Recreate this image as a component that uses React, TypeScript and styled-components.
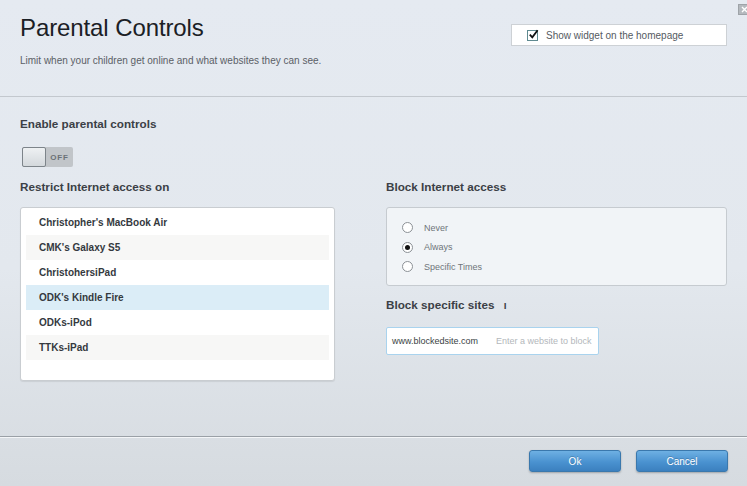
import React from "react";
import styled, { createGlobalStyle } from "styled-components";

const GlobalStyle = createGlobalStyle`
  html, body {
    margin: 0;
    padding: 0;
  }
  body {
    font-family: "Liberation Sans", Arial, sans-serif;
    color: #333;
  }
`;

const devices = [
  "Christopher's MacBook Air",
  "CMK's Galaxy S5",
  "ChristohersiPad",
  "ODK's Kindle Fire",
  "ODKs-iPod",
  "TTKs-iPad",
];

const options = ["Never", "Always", "Specific Times"];

const App: React.FC = () => {
  const selectedDevice = 3;
  const blockMode = 1;

  return (
    <>
      <GlobalStyle />
      <StyledPage>
        <CloseButton aria-label="close">
          <svg width="9" height="9" viewBox="0 0 9 9">
            <path d="M2 2 L7 7 M7 2 L2 7" stroke="#fff" strokeWidth="1.4" />
          </svg>
        </CloseButton>

        <Header>
          <div>
            <Title>Parental Controls</Title>
            <Subtitle>
              Limit when your children get online and what websites they can
              see.
            </Subtitle>
          </div>
          <WidgetBox>
            <CheckBox>
              <svg width="11" height="11" viewBox="0 0 11 11">
                <path
                  d="M1.8 5.6 L4.3 8.3 L9.6 1.2"
                  fill="none"
                  stroke="#111"
                  strokeWidth="1.8"
                />
              </svg>
            </CheckBox>
            Show widget on the homepage
          </WidgetBox>
        </Header>

        <Body>
          <Heading>Enable parental controls</Heading>
          <Toggle>
            <Knob />
            <ToggleLabel>OFF</ToggleLabel>
          </Toggle>

          <Columns>
            <Column>
              <Heading>Restrict Internet access on</Heading>
              <DeviceList>
                {devices.map((d, i) => (
                  <DeviceRow
                    key={d}
                    $alt={i % 4 === 1}
                    $active={i === selectedDevice}
                  >
                    {d}
                  </DeviceRow>
                ))}
              </DeviceList>
            </Column>

            <Column>
              <Heading>Block Internet access</Heading>
              <RadioPanel>
                {options.map((o, i) => (
                  <RadioRow key={o}>
                    <Radio $checked={i === blockMode} />
                    {o}
                  </RadioRow>
                ))}
              </RadioPanel>
              <SitesHeading>
                Block specific sites <InfoMark>ı</InfoMark>
              </SitesHeading>
              <SiteInput>
                <SiteValue>www.blockedsite.com</SiteValue>
                <SiteField placeholder="Enter a website to block" />
              </SiteInput>
            </Column>
          </Columns>
        </Body>

        <Footer>
          <ActionButton>Ok</ActionButton>
          <ActionButton>Cancel</ActionButton>
        </Footer>
      </StyledPage>
    </>
  );
};

const StyledPage = styled.div`
  position: relative;
  width: 747px;
  height: 486px;
  overflow: hidden;
  display: flex;
  flex-direction: column;
  background: linear-gradient(180deg, #e5eaf1 0%, #e3e8ee 55%, #d6dbe0 100%);
`;

const CloseButton = styled.div`
  position: absolute;
  top: 4px;
  right: -3px;
  width: 10px;
  height: 9px;
  background: #b4b9be;
  border: 1px solid #9ea3a8;
  display: flex;
  align-items: center;
  justify-content: center;
`;

const Header = styled.header`
  height: 82px;
  padding: 14px 20px 0 20px;
  display: flex;
  justify-content: space-between;
  align-items: flex-start;
  border-bottom: 1px solid #c3c8ce;
`;

const Title = styled.h1`
  margin: 0;
  font-size: 24px;
  line-height: 28px;
  font-weight: 400;
  color: #1b2025;
  letter-spacing: -0.1px;
`;

const Subtitle = styled.p`
  margin: 13px 0 0;
  font-size: 10px;
  line-height: 12px;
  color: #5b6066;
`;

const WidgetBox = styled.div`
  margin-top: 10px;
  width: 199px;
  height: 20px;
  padding-left: 15px;
  display: flex;
  align-items: center;
  gap: 8px;
  background: #fff;
  border: 1px solid #cdd1d5;
  font-size: 10px;
  color: #555a5f;
`;

const CheckBox = styled.span`
  width: 9px;
  height: 9px;
  border: 1px solid #5f8a90;
  background: #fff;
  position: relative;
  svg {
    position: absolute;
    left: 0;
    top: -2px;
  }
`;

const Body = styled.main`
  flex: 1;
  padding: 20px 18px 0 20px;
  display: flex;
  flex-direction: column;
  align-items: flex-start;
`;

const Columns = styled.div`
  margin-top: 13px;
  display: grid;
  grid-template-columns: 313px 343px;
  column-gap: 53px;
`;

const Column = styled.section`
  display: flex;
  flex-direction: column;
  align-items: flex-start;
`;

const Heading = styled.h2`
  margin: 0;
  font-size: 11.7px;
  line-height: 14px;
  font-weight: 700;
  color: #3b4046;
`;

const Toggle = styled.div`
  margin: 16px 0 0 2px;
  width: 51px;
  height: 20px;
  display: flex;
  background: #c1c5c9;
  border-radius: 2px;
`;

const Knob = styled.span`
  width: 22px;
  height: 18px;
  border: 1px solid #7d848a;
  border-radius: 2px;
  background: linear-gradient(180deg, #eef1f3 0%, #d3d8dc 100%);
`;

const ToggleLabel = styled.span`
  flex: 1;
  display: flex;
  align-items: center;
  justify-content: center;
  font-size: 8px;
  font-weight: 700;
  letter-spacing: 0.8px;
  color: #6b7176;
`;

const DeviceList = styled.ul`
  list-style: none;
  margin: 13px 0 0;
  padding: 2px 5px 20px;
  width: 303px;
  box-sizing: content-box;
  background: #fff;
  border: 1px solid #c9cdd1;
  border-radius: 3px;
  box-shadow: 0 1px 1px rgba(0, 0, 0, 0.08);
`;

const DeviceRow = styled.li<{ $alt: boolean; $active: boolean }>`
  height: 25px;
  padding-left: 13px;
  display: flex;
  align-items: center;
  font-size: 10px;
  font-weight: 700;
  color: #34393e;
  background: ${(p) => (p.$active ? "#dbedf7" : p.$alt ? "#f7f7f6" : "#fff")};
`;

const RadioPanel = styled.div`
  margin-top: 13px;
  width: 341px;
  height: 79px;
  padding-top: 13px;
  box-sizing: border-box;
  display: flex;
  flex-direction: column;
  gap: 6.5px;
  background: #f1f4f7;
  border: 1px solid #c6cbd0;
  border-radius: 3px;
`;

const RadioRow = styled.label`
  height: 13px;
  padding-left: 15px;
  display: flex;
  align-items: center;
  gap: 11px;
  font-size: 9px;
  color: #6f747a;
`;

const Radio = styled.span<{ $checked: boolean }>`
  width: 9px;
  height: 9px;
  border-radius: 50%;
  border: 1px solid #8c9196;
  background: #fff;
  display: flex;
  align-items: center;
  justify-content: center;
  &::after {
    content: "";
    width: 5px;
    height: 5px;
    border-radius: 50%;
    background: ${(p) => (p.$checked ? "#111" : "transparent")};
  }
`;

const SitesHeading = styled(Heading)`
  margin-top: 12px;
`;

const InfoMark = styled.span`
  margin-left: 6px;
  font-size: 10px;
  color: #3b4046;
`;

const SiteInput = styled.div`
  margin-top: 14px;
  width: 211px;
  height: 26px;
  display: flex;
  align-items: center;
  background: #fff;
  border: 1px solid #a9d3ee;
  border-radius: 2px;
  overflow: hidden;
`;

const SiteValue = styled.span`
  padding-left: 5px;
  width: 104px;
  flex-shrink: 0;
  font-size: 9px;
  color: #3a3f44;
`;

const SiteField = styled.input`
  flex: 1;
  min-width: 0;
  border: 0;
  outline: 0;
  padding: 0;
  background: transparent;
  font-family: "Liberation Sans", Arial, sans-serif;
  font-size: 9px;
  color: #333;
  &::placeholder {
    color: #b3b7bb;
  }
`;

const Footer = styled.footer`
  height: 50px;
  padding: 13px 19px 0 0;
  box-sizing: border-box;
  display: flex;
  justify-content: flex-end;
  align-items: flex-start;
  gap: 15px;
  border-top: 1px solid #9aa0a6;
  box-shadow: inset 0 1px 0 #f4f6f8;
`;

const ActionButton = styled.button`
  width: 92px;
  height: 22px;
  border: 1px solid #3a78ad;
  border-radius: 3px;
  background: linear-gradient(180deg, #6eb0e3 0%, #4a92d0 55%, #3b80bf 100%);
  box-shadow: 0 1px 2px rgba(0, 0, 0, 0.25);
  color: #fff;
  font-family: "Liberation Sans", Arial, sans-serif;
  font-size: 10px;
  text-shadow: 0 -1px 0 rgba(0, 0, 0, 0.2);
  cursor: pointer;
`;

export default App;
